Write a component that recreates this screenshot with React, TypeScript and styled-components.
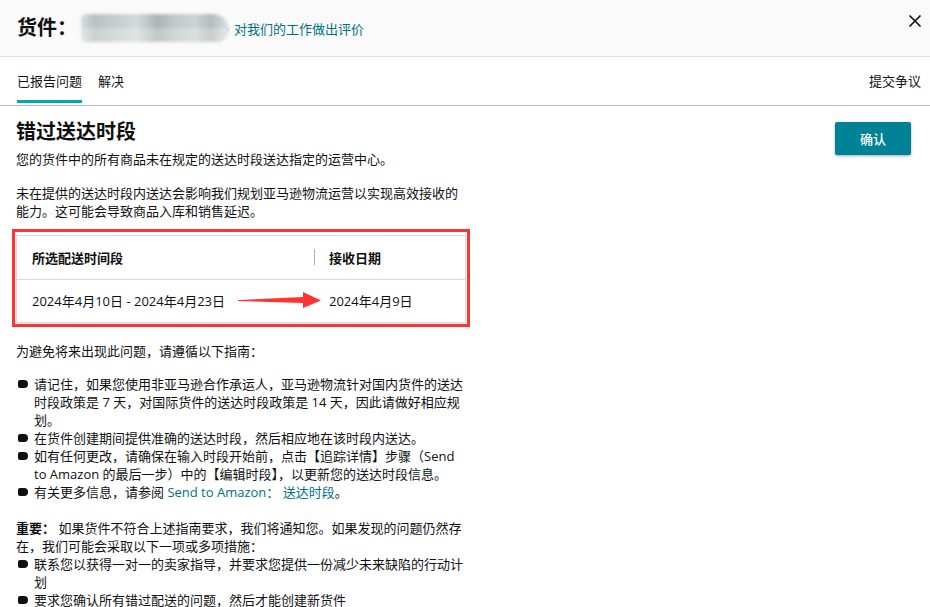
import React from "react";
import styled, { createGlobalStyle } from "styled-components";

const Global = createGlobalStyle`
  html, body { margin: 0; padding: 0; background: #fff; }
  body {
    font-family: "Open Sans", "Noto Sans CJK SC", sans-serif;
    font-size: 13px;
    line-height: 18px;
    color: #0f1111;
  }
  * { box-sizing: border-box; }
`;

const Page = styled.div`
  width: 930px;
  height: 607px;
  overflow: hidden;
  background: #fff;
`;

const Header = styled.header`
  height: 57px;
  background: #fafafa;
  border-bottom: 1px solid #dddddd;
  display: flex;
  align-items: center;
  padding: 0 6px 0 17px;
`;

const Title = styled.h1`
  margin: 0;
  font-size: 20px;
  font-weight: 700;
  line-height: 28px;
  color: #0f1111;
`;

const Blur = styled.span`
  display: inline-block;
  width: 148px;
  height: 28px;
  margin-left: 4px;
  border-radius: 13px 40px 30px 14px;
  background:
    linear-gradient(180deg, rgba(255,255,255,0) 0 50%, rgba(255,255,255,0.25) 50% 100%),
    linear-gradient(
      90deg,
      #d6dbdd 0px,
      #bac1c3 14px,
      #c6cdcf 34px,
      #d4dadc 56px,
      #adb4b5 76px,
      #c4cbcd 96px,
      #cdd3d5 114px,
      #b5bcbd 130px,
      #dde1e3 148px
    );
  filter: blur(1.4px);
`;

const Chevron = styled.span`
  color: #007185;
  font-size: 13px;
  margin-left: -4px;
  margin-right: 5px;
`;

const Link = styled.a`
  color: #007185;
  text-decoration: none;
  font-size: 13px;
  line-height: 18px;
  margin-top: 2px;
`;

const Spacer = styled.div`
  flex: 1;
`;

const CloseBtn = styled.button`
  border: 0;
  background: transparent;
  padding: 0;
  width: 18px;
  height: 18px;
  display: flex;
  align-items: center;
  justify-content: center;
  margin-top: -14px;
  cursor: pointer;
`;

const Tabs = styled.nav`
  height: 49px;
  border-bottom: 1px solid #bbbbbb;
  display: flex;
  align-items: stretch;
  padding: 0 9px 0 17px;
  gap: 16px;
`;

const Tab = styled.div<{ $active?: boolean }>`
  display: flex;
  align-items: center;
  position: relative;
  padding-bottom: 1px;
  color: #0f1111;
  &::after {
    content: "";
    position: absolute;
    left: 0;
    right: 0;
    bottom: 2px;
    height: 3px;
    background: ${(p) => (p.$active ? "#00a8b5" : "transparent")};
  }
`;

const TabRight = styled(Tab)`
  margin-left: auto;
`;

const Content = styled.main`
  display: flex;
  justify-content: space-between;
  padding: 12px 19px 0 16px;
`;

const Column = styled.section`
  width: 450px;
`;

const Heading = styled.h2`
  margin: 0 0 4px;
  font-size: 20px;
  font-weight: 700;
  line-height: 28px;
`;

const P = styled.p<{ $mb?: number }>`
  margin: 0 0 ${(p) => p.$mb ?? 16}px;
`;

const Annot = styled.div`
  border: 3px solid #ff3333;
  padding: 3px 1px 1px;
  margin: 9px -4px 15px -4px;
`;

const Table = styled.div`
  border: 1px solid #d5d9d9;
  box-shadow: 0 1px 2px rgba(0, 0, 0, 0.12);
`;

const Row = styled.div<{ $head?: boolean }>`
  position: relative;
  display: grid;
  grid-template-columns: 297px 1fr;
  height: ${(p) => (p.$head ? 44 : 42)}px;
  align-items: center;
  font-weight: ${(p) => (p.$head ? 700 : 400)};
  border-bottom: ${(p) => (p.$head ? "1px solid #d5d9d9" : "0")};
`;

const Cell = styled.div<{ $divider?: boolean }>`
  padding-left: 15px;
  position: relative;
  ${(p) =>
    p.$divider
      ? `&::before {
          content: "";
          position: absolute;
          left: 0;
          top: 0;
          height: 16px;
          width: 1px;
          background: #a6b2b4;
        }`
      : ""}
`;

const Arrow = styled.svg`
  position: absolute;
  left: 221px;
  top: 11px;
`;

const List = styled.ul<{ $mb?: number }>`
  list-style: none;
  margin: 0 0 ${(p) => p.$mb ?? 0}px;
  padding: 0;
`;

const Item = styled.li`
  position: relative;
  padding-left: 18px;
  &::before {
    content: "";
    position: absolute;
    left: 2px;
    top: 5px;
    width: 10px;
    height: 8px;
    background: #0f1111;
    border-radius: 2px 4px 4px 2px;
  }
`;

const TextLink = styled.a`
  color: #007185;
  text-decoration: none;
`;

const Strong = styled.strong`
  font-weight: 700;
`;

const Button = styled.button`
  margin-top: 4px;
  width: 76px;
  height: 33px;
  border: 0;
  border-radius: 2px;
  background: #008296;
  color: #fff;
  font-family: "Open Sans", "Noto Sans CJK SC", sans-serif;
  font-size: 13px;
  font-weight: 500;
  box-shadow: 0 1px 3px rgba(0, 0, 0, 0.35);
  cursor: pointer;
`;

export default function App() {
  return (
    <Page>
      <Global />
      <Header>
        <Title>货件：</Title>
        <Blur />
        <Chevron>›</Chevron>
        <Link href="#">对我们的工作做出评价</Link>
        <Spacer />
        <CloseBtn aria-label="关闭">
          <svg width="14" height="14" viewBox="0 0 14 14">
            <path d="M1.5 1.5 L12.5 12.5 M12.5 1.5 L1.5 12.5" stroke="#0f1111" strokeWidth="1.7" fill="none" />
          </svg>
        </CloseBtn>
      </Header>
      <Tabs>
        <Tab $active>已报告问题</Tab>
        <Tab>解决</Tab>
        <TabRight>提交争议</TabRight>
      </Tabs>
      <Content>
        <Column>
          <Heading>错过送达时段</Heading>
          <P>您的货件中的所有商品未在规定的送达时段送达指定的运营中心。</P>
          <P $mb={0}>未在提供的送达时段内送达会影响我们规划亚马逊物流运营以实现高效接收的能力。这可能会导致商品入库和销售延迟。</P>
          <Annot>
            <Table>
              <Row $head>
                <Cell>所选配送时间段</Cell>
                <Cell $divider>接收日期</Cell>
              </Row>
              <Row>
                <Cell>2024年4月10日 - 2024年4月23日</Cell>
                <Cell>2024年4月9日</Cell>
                <Arrow width="84" height="18" viewBox="0 0 84 18">
                  <polygon points="0,9 0,10 65,12 65,17 83,9.5 65,1 65,6" fill="#ff3333" />
                </Arrow>
              </Row>
            </Table>
          </Annot>
          <P $mb={15}>为避免将来出现此问题，请遵循以下指南：</P>
          <List $mb={18}>
            <Item>请记住，如果您使用非亚马逊合作承运人，亚马逊物流针对国内货件的送达时段政策是 7 天，对国际货件的送达时段政策是 14 天，因此请做好相应规划。</Item>
            <Item>在货件创建期间提供准确的送达时段，然后相应地在该时段内送达。</Item>
            <Item>如有任何更改，请确保在输入时段开始前，点击【追踪详情】步骤（Send to Amazon 的最后一步）中的【编辑时段】，以更新您的送达时段信息。</Item>
            <Item>有关更多信息，请参阅 <TextLink href="#">Send to Amazon： 送达时段</TextLink>。</Item>
          </List>
          <P $mb={0}>
            <Strong>重要：</Strong> 如果货件不符合上述指南要求，我们将通知您。如果发现的问题仍然存在，我们可能会采取以下一项或多项措施：
          </P>
          <List>
            <Item>联系您以获得一对一的卖家指导，并要求您提供一份减少未来缺陷的行动计划</Item>
            <Item>要求您确认所有错过配送的问题，然后才能创建新货件</Item>
          </List>
        </Column>
        <Button>确认</Button>
      </Content>
    </Page>
  );
}
